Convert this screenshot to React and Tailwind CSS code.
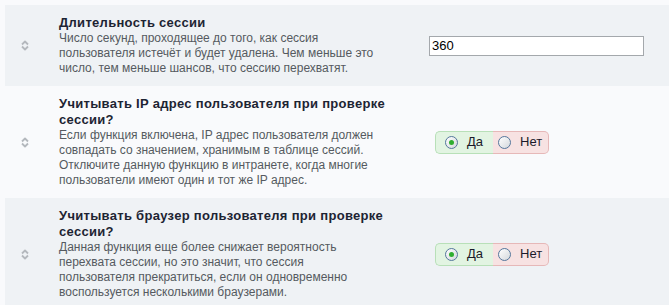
import { useState } from 'react';

function SortIcon() {
    return (
        <svg width="8" height="11" viewBox="0 0 8 11" className="shrink-0">
            <path d="M1 4.5 L4 1.5 L7 4.5" fill="none" stroke="#b4b8bd" strokeWidth="1.8" strokeLinejoin="round" />
            <path d="M1 6.5 L4 9.5 L7 6.5" fill="none" stroke="#b4b8bd" strokeWidth="1.8" strokeLinejoin="round" />
        </svg>
    );
}

function Radio({ checked }) {
    return (
        <span className="w-[13px] h-[13px] rounded-full border border-[#55779c] bg-gradient-to-br from-white to-[#d4d8dc] flex items-center justify-center shrink-0">
            {checked && <span className="w-[5px] h-[5px] rounded-full bg-[#2fae2f]" />}
        </span>
    );
}

function YesNo({ value, onChange }) {
    return (
        <div className="flex h-[23px] ml-[6px] text-[13px] text-[#1a1a2a]">
            <label
                onClick={() => onChange(true)}
                className="flex items-center gap-[9px] pl-[9px] pr-[10px] bg-[#e2f4e2] border border-[#b8e0b8] border-r-0 rounded-l-[5px] cursor-pointer"
            >
                <Radio checked={value} />
                <span>Да</span>
            </label>
            <label
                onClick={() => onChange(false)}
                className="flex items-center gap-[9px] pl-[5px] pr-[6px] bg-[#f7e2e2] border border-[#e6b8b8] border-l-0 rounded-r-[5px] cursor-pointer"
            >
                <Radio checked={!value} />
                <span>Нет</span>
            </label>
        </div>
    );
}

function Row({ title, desc, odd, children }) {
    return (
        <div className={`flex items-center py-[10px] ${odd ? 'bg-[#eff2f5]' : 'bg-[#f9fafc]'}`}>
            <div className="w-[54px] flex pl-[16px]">
                <SortIcon />
            </div>
            <div className="w-[335px] whitespace-nowrap">
                <div className="text-[13px] leading-[16px] font-bold tracking-[0.3px] text-[#1d2433]">
                    {title.map((l, i) => <div key={i}>{l}</div>)}
                </div>
                <div className="text-[12px] leading-[15px] text-[#555a60]">
                    {desc.map((l, i) => <div key={i}>{l}</div>)}
                </div>
            </div>
            <div className="flex-1 pl-[35px] pr-[25px] flex items-center">
                {children}
            </div>
        </div>
    );
}

export default function App() {
    const [lifetime, setLifetime] = useState('360');
    const [checkIp, setCheckIp] = useState(true);
    const [checkBrowser, setCheckBrowser] = useState(true);

    return (
        <div className="w-[669px] h-[305px] overflow-hidden bg-[#f9fafc] pt-[5px] pl-[5px]" style={{ fontFamily: '"Liberation Sans", Arial, sans-serif' }}>
            <Row
                odd
                title={['Длительность сессии']}
                desc={[
                    'Число секунд, проходящее до того, как сессия',
                    'пользователя истечёт и будет удалена. Чем меньше это',
                    'число, тем меньше шансов, что сессию перехватят.',
                ]}
            >
                <input
                    value={lifetime}
                    onChange={e => setLifetime(e.target.value)}
                    className="w-[215px] h-[20px] border border-[#a4a8ac] bg-white px-[2px] text-[13px] text-black outline-none"
                />
            </Row>
            <Row
                title={['Учитывать IP адрес пользователя при проверке', 'сессии?']}
                desc={[
                    'Если функция включена, IP адрес пользователя должен',
                    'совпадать со значением, хранимым в таблице сессий.',
                    'Отключите данную функцию в интранете, когда многие',
                    'пользователи имеют один и тот же IP адрес.',
                ]}
            >
                <YesNo value={checkIp} onChange={setCheckIp} />
            </Row>
            <Row
                odd
                title={['Учитывать браузер пользователя при проверке', 'сессии?']}
                desc={[
                    'Данная функция еще более снижает вероятность',
                    'перехвата сессии, но это значит, что сессия',
                    'пользователя прекратиться, если он одновременно',
                    'воспользуется несколькими браузерами.',
                ]}
            >
                <YesNo value={checkBrowser} onChange={setCheckBrowser} />
            </Row>
        </div>
    );
}
